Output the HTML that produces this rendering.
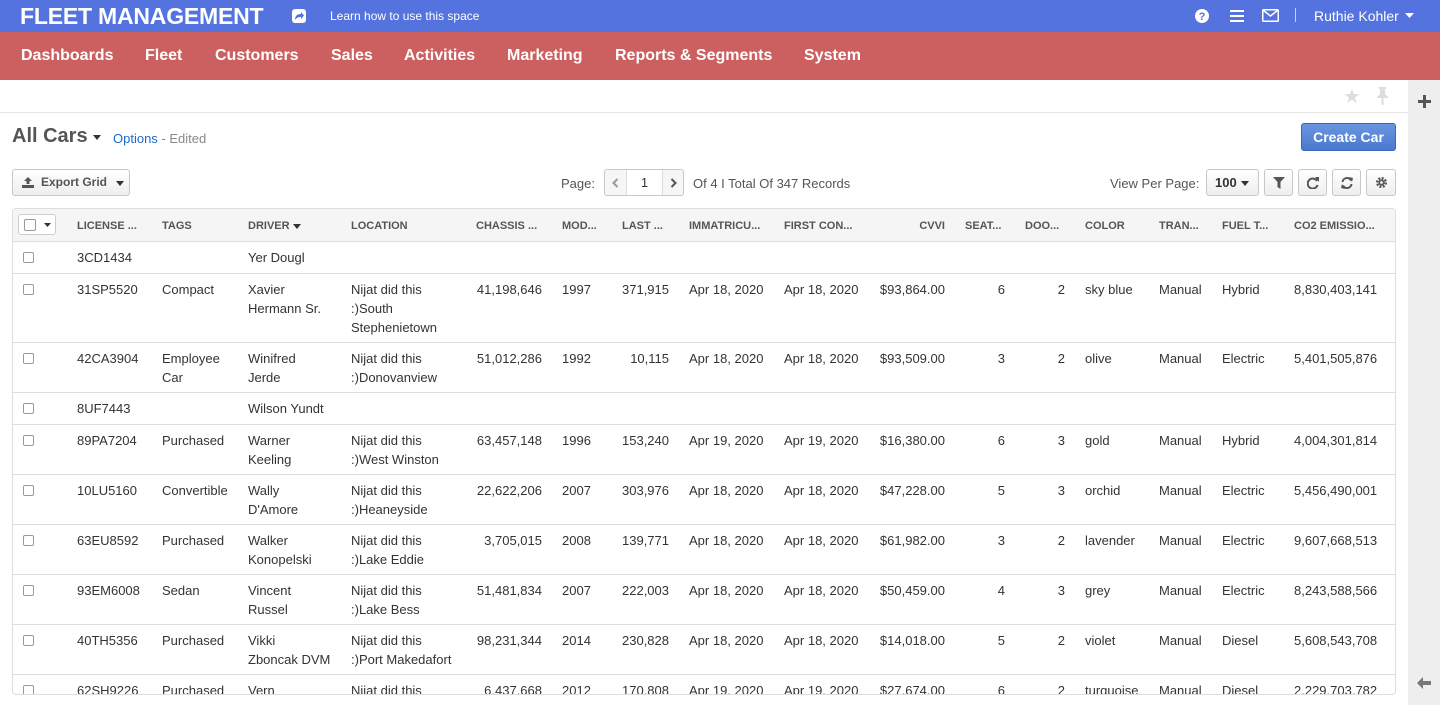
<!DOCTYPE html>
<html><head><meta charset="utf-8"><style>
*{box-sizing:border-box;margin:0;padding:0}
body{width:1440px;height:705px;overflow:hidden;font-family:"Liberation Sans",Arial,sans-serif;color:#333;background:#fff;position:relative}
.top{position:absolute;left:0;top:0;width:1440px;height:32px;background:#5473de;color:#fff}
.brand{position:absolute;left:20px;top:3px;font-size:23px;font-weight:bold;letter-spacing:-0.2px}
.learn{position:absolute;left:330px;top:9px;font-size:12px}
.nav{position:absolute;left:0;top:32px;width:1440px;height:48px;background:#cc6060}
.nav span{position:absolute;top:15px;color:#fff;font-weight:bold;font-size:16px}
.side{position:absolute;left:1408px;top:80px;width:32px;height:625px;background:#eeeeee}
.bar{position:absolute;left:0;top:80px;width:1408px;height:33px;border-bottom:1px solid #e5e5e5}
.btn{position:absolute;border:1px solid #c8c8c8;border-radius:3px;background:linear-gradient(#fff,#eee);height:27px}
.wrap{position:absolute;left:12px;top:208px;width:1384px;height:487px;border:1px solid #ddd;border-radius:4px;overflow:hidden}
table{border-collapse:collapse;table-layout:fixed;width:1382px;font-size:13px}
th{background:#f5f5f5;height:32px;font-size:11px;color:#555;text-align:left;font-weight:bold;padding:3px 10px 0;white-space:nowrap;border-bottom:1px solid #ddd}
td{padding:6px 10px 5px;line-height:19px;vertical-align:top;border-bottom:1px solid #ddd;color:#333}
.r{text-align:right}
.cb{display:inline-block;width:11px;height:11px;border:1px solid #999;border-radius:2px;margin-top:4px;margin-left:0}
</style></head><body>
<div class="top">
<div class="brand">FLEET MANAGEMENT</div>
<svg style="position:absolute;left:292px;top:9px" width="14" height="14" viewBox="0 0 14 14"><rect width="14" height="14" rx="3" fill="#fff"/><path d="M3 11 C3 6 6 5 9 5 V3 L12 6.5 L9 10 V8 C6 8 4.5 9 3 11Z" fill="#5473de"/></svg>
<div class="learn">Learn how to use this space</div>
<svg style="position:absolute;left:1195px;top:9px" width="14" height="14"><circle cx="7" cy="7" r="7" fill="#fff"/><text x="7" y="11" font-size="11" font-weight="bold" text-anchor="middle" fill="#5473de" font-family="Liberation Sans">?</text></svg>
<svg style="position:absolute;left:1230px;top:10px" width="14" height="12"><rect y="0" width="14" height="2" fill="#fff"/><rect y="5" width="14" height="2" fill="#fff"/><rect y="10" width="14" height="2" fill="#fff"/></svg>
<svg style="position:absolute;left:1262px;top:9px" width="17" height="13"><rect x="0.75" y="0.75" width="15.5" height="11.5" rx="1" fill="none" stroke="#fff" stroke-width="1.5"/><path d="M1 1 L8.5 7 L16 1" fill="none" stroke="#fff" stroke-width="1.5"/></svg>
<div style="position:absolute;left:1295px;top:8px;width:1px;height:14px;background:#c8d0f0"></div>
<div style="position:absolute;left:1314px;top:8px;font-size:14px">Ruthie Kohler</div>
<svg style="position:absolute;left:1405px;top:13px" width="9" height="5"><path d="M0 0H9L4.5 5Z" fill="#fff"/></svg>
</div>
<div class="nav">
<span style="left:21px">Dashboards</span><span style="left:145px">Fleet</span><span style="left:215px">Customers</span><span style="left:331px">Sales</span><span style="left:404px">Activities</span><span style="left:507px">Marketing</span><span style="left:615px">Reports &amp; Segments</span><span style="left:804px">System</span>
</div>
<div class="bar">
<span style="position:absolute;left:1343px;top:4px;color:#ddd;font-size:20px">★</span>
<svg style="position:absolute;left:1376px;top:7px" width="13" height="18"><path d="M3 0H10V2H9V7L12 10V11H7.5V18H5.5V11H1V10L4 7V2H3Z" fill="#ddd"/></svg>
</div>
<div class="side">
<div style="position:absolute;left:10px;top:20px;width:13px;height:3px;background:#555"></div>
<div style="position:absolute;left:15px;top:15px;width:3px;height:13px;background:#555"></div>
<svg style="position:absolute;left:9px;top:597px" width="14" height="12"><path d="M6 0L0 6L6 12V8H14V4H6Z" fill="#777"/></svg>
</div>
<div style="position:absolute;left:12px;top:125px;font-size:20px;font-weight:bold;color:#555">All Cars</div>
<svg style="position:absolute;left:93px;top:135px" width="8" height="5"><path d="M0 0H8L4 5Z" fill="#333"/></svg>
<div style="position:absolute;left:113px;top:131px;font-size:13px;color:#888"><span style="color:#1a6bc8">Options</span> - Edited</div>
<div style="position:absolute;left:1301px;top:123px;width:95px;height:28px;border-radius:3px;background:linear-gradient(#6a96e0,#4a78cf);border:1px solid #3d67b8;color:#fff;font-weight:bold;font-size:14px;text-align:center;line-height:26px">Create Car</div>
<div class="btn" style="left:12px;top:169px;width:118px;font-size:12px;font-weight:bold;color:#555;line-height:25px">
<svg style="position:absolute;left:9px;top:7px" width="12" height="11"><path d="M6 0L10 4H7.5V7H4.5V4H2Z M0 8H12V11H0Z" fill="#555"/></svg>
<span style="position:absolute;left:28px">Export Grid</span>
<svg style="position:absolute;left:103px;top:11px" width="8" height="5"><path d="M0 0H8L4 5Z" fill="#333"/></svg>
</div>
<div style="position:absolute;left:561px;top:176px;font-size:13px;color:#555">Page:</div>
<div class="btn" style="left:604px;top:169px;width:80px;background:#f6f6f6">
<div style="position:absolute;left:21px;top:0;width:37px;height:25px;background:#fff;border-left:1px solid #ddd;border-right:1px solid #ddd;text-align:center;font-size:13px;line-height:25px">1</div>
<svg style="position:absolute;left:7px;top:8px" width="7" height="10"><path d="M5.5 1L1.5 5L5.5 9" fill="none" stroke="#999" stroke-width="2"/></svg>
<svg style="position:absolute;left:65px;top:8px" width="7" height="10"><path d="M1.5 1L5.5 5L1.5 9" fill="none" stroke="#555" stroke-width="2"/></svg>
</div>
<div style="position:absolute;left:693px;top:176px;font-size:13px;color:#555">Of 4 I Total Of 347 Records</div>
<div style="position:absolute;left:1110px;top:176px;font-size:13px;color:#555">View Per Page:</div>
<div class="btn" style="left:1206px;top:169px;width:53px;font-size:13px;font-weight:bold;line-height:25px;padding-left:8px">100<svg style="position:absolute;left:34px;top:11px" width="8" height="5"><path d="M0 0H8L4 5Z" fill="#333"/></svg></div>
<div class="btn" style="left:1264px;top:169px;width:29px"><svg style="position:absolute;left:8px;top:7px" width="12" height="12"><path d="M0 0H12L7.5 5V12L4.5 10V5Z" fill="#555"/></svg></div>
<div class="btn" style="left:1298px;top:169px;width:29px"><svg style="position:absolute;left:8px;top:7px" width="12" height="12"><path d="M10 4A5 5 0 1 0 10.5 8" fill="none" stroke="#555" stroke-width="2"/><path d="M8 0L12 0L12 5Z" fill="#555"/></svg></div>
<div class="btn" style="left:1332px;top:169px;width:29px"><svg style="position:absolute;left:8px;top:7px" width="12" height="12"><path d="M1.5 5A4.5 4.5 0 0 1 10 3.5M10.5 7A4.5 4.5 0 0 1 2 8.5" fill="none" stroke="#555" stroke-width="2"/><path d="M8 0L12 1L11 5Z M4 12L0 11L1 7Z" fill="#555"/></svg></div>
<div class="btn" style="left:1366px;top:169px;width:30px"><svg style="position:absolute;left:8px;top:6px" width="13" height="13" viewBox="0 0 13 13"><circle cx="6.5" cy="6.5" r="4.2" fill="none" stroke="#555" stroke-width="2.6" stroke-dasharray="2 1.3"/><circle cx="6.5" cy="6.5" r="3" fill="#555"/><circle cx="6.5" cy="6.5" r="1.4" fill="#f4f4f4"/></svg></div>

<div class="wrap"><table>
<colgroup><col style="width:54px"><col style="width:85px"><col style="width:86px"><col style="width:103px"><col style="width:125px"><col style="width:86px"><col style="width:60px"><col style="width:67px"><col style="width:95px"><col style="width:95px"><col style="width:86px"><col style="width:60px"><col style="width:60px"><col style="width:74px"><col style="width:63px"><col style="width:72px"><col style="width:111px"></colgroup>
<tr><th style="padding:0 0 0 5px"><div style="width:38px;height:21px;border:1px solid #ccc;border-radius:3px;background:#fff;position:relative"><span class="cb" style="position:absolute;left:5px;top:1px;margin:0;width:12px;height:12px;margin-top:3px"></span><svg style="position:absolute;left:25px;top:8px" width="7" height="4"><path d="M0 0H7L3.5 4Z" fill="#333"/></svg></div></th><th>LICENSE ...</th><th>TAGS</th><th>DRIVER <svg width="8" height="5"><path d="M0 0H8L4 5Z" fill="#333"/></svg></th><th>LOCATION</th><th>CHASSIS ...</th><th>MOD...</th><th>LAST ...</th><th>IMMATRICU...</th><th>FIRST CON...</th><th class="r">CVVI</th><th>SEAT...</th><th>DOO...</th><th>COLOR</th><th>TRAN...</th><th>FUEL T...</th><th>CO2 EMISSIO...</th></tr>
<tr><td><span class="cb"></span></td><td>3CD1434</td><td></td><td>Yer Dougl</td><td></td><td></td><td></td><td></td><td></td><td></td><td></td><td></td><td></td><td></td><td></td><td></td><td></td></tr>
<tr><td><span class="cb"></span></td><td>31SP5520</td><td>Compact</td><td>Xavier Hermann Sr.</td><td>Nijat did this :)South Stephenietown</td><td class="r">41,198,646</td><td>1997</td><td class="r">371,915</td><td>Apr 18, 2020</td><td>Apr 18, 2020</td><td class="r">$93,864.00</td><td class="r">6</td><td class="r">2</td><td>sky blue</td><td>Manual</td><td>Hybrid</td><td>8,830,403,141</td></tr>
<tr><td><span class="cb"></span></td><td>42CA3904</td><td>Employee Car</td><td>Winifred Jerde</td><td>Nijat did this :)Donovanview</td><td class="r">51,012,286</td><td>1992</td><td class="r">10,115</td><td>Apr 18, 2020</td><td>Apr 18, 2020</td><td class="r">$93,509.00</td><td class="r">3</td><td class="r">2</td><td>olive</td><td>Manual</td><td>Electric</td><td>5,401,505,876</td></tr>
<tr><td><span class="cb"></span></td><td>8UF7443</td><td></td><td>Wilson Yundt</td><td></td><td></td><td></td><td></td><td></td><td></td><td></td><td></td><td></td><td></td><td></td><td></td><td></td></tr>
<tr><td><span class="cb"></span></td><td>89PA7204</td><td>Purchased</td><td>Warner Keeling</td><td>Nijat did this :)West Winston</td><td class="r">63,457,148</td><td>1996</td><td class="r">153,240</td><td>Apr 19, 2020</td><td>Apr 19, 2020</td><td class="r">$16,380.00</td><td class="r">6</td><td class="r">3</td><td>gold</td><td>Manual</td><td>Hybrid</td><td>4,004,301,814</td></tr>
<tr><td><span class="cb"></span></td><td>10LU5160</td><td>Convertible</td><td>Wally D'Amore</td><td>Nijat did this :)Heaneyside</td><td class="r">22,622,206</td><td>2007</td><td class="r">303,976</td><td>Apr 18, 2020</td><td>Apr 18, 2020</td><td class="r">$47,228.00</td><td class="r">5</td><td class="r">3</td><td>orchid</td><td>Manual</td><td>Electric</td><td>5,456,490,001</td></tr>
<tr><td><span class="cb"></span></td><td>63EU8592</td><td>Purchased</td><td>Walker Konopelski</td><td>Nijat did this :)Lake Eddie</td><td class="r">3,705,015</td><td>2008</td><td class="r">139,771</td><td>Apr 18, 2020</td><td>Apr 18, 2020</td><td class="r">$61,982.00</td><td class="r">3</td><td class="r">2</td><td>lavender</td><td>Manual</td><td>Electric</td><td>9,607,668,513</td></tr>
<tr><td><span class="cb"></span></td><td>93EM6008</td><td>Sedan</td><td>Vincent Russel</td><td>Nijat did this :)Lake Bess</td><td class="r">51,481,834</td><td>2007</td><td class="r">222,003</td><td>Apr 18, 2020</td><td>Apr 18, 2020</td><td class="r">$50,459.00</td><td class="r">4</td><td class="r">3</td><td>grey</td><td>Manual</td><td>Electric</td><td>8,243,588,566</td></tr>
<tr><td><span class="cb"></span></td><td>40TH5356</td><td>Purchased</td><td>Vikki<br>Zboncak DVM</td><td>Nijat did this :)Port Makedafort</td><td class="r">98,231,344</td><td>2014</td><td class="r">230,828</td><td>Apr 18, 2020</td><td>Apr 18, 2020</td><td class="r">$14,018.00</td><td class="r">5</td><td class="r">2</td><td>violet</td><td>Manual</td><td>Diesel</td><td>5,608,543,708</td></tr>
<tr><td><span class="cb"></span></td><td>62SH9226</td><td>Purchased</td><td>Vern</td><td>Nijat did this</td><td class="r">6,437,668</td><td>2012</td><td class="r">170,808</td><td>Apr 19, 2020</td><td>Apr 19, 2020</td><td class="r">$27,674.00</td><td class="r">6</td><td class="r">2</td><td>turquoise</td><td>Manual</td><td>Diesel</td><td>2,229,703,782</td></tr>
</table></div>
</body></html>
